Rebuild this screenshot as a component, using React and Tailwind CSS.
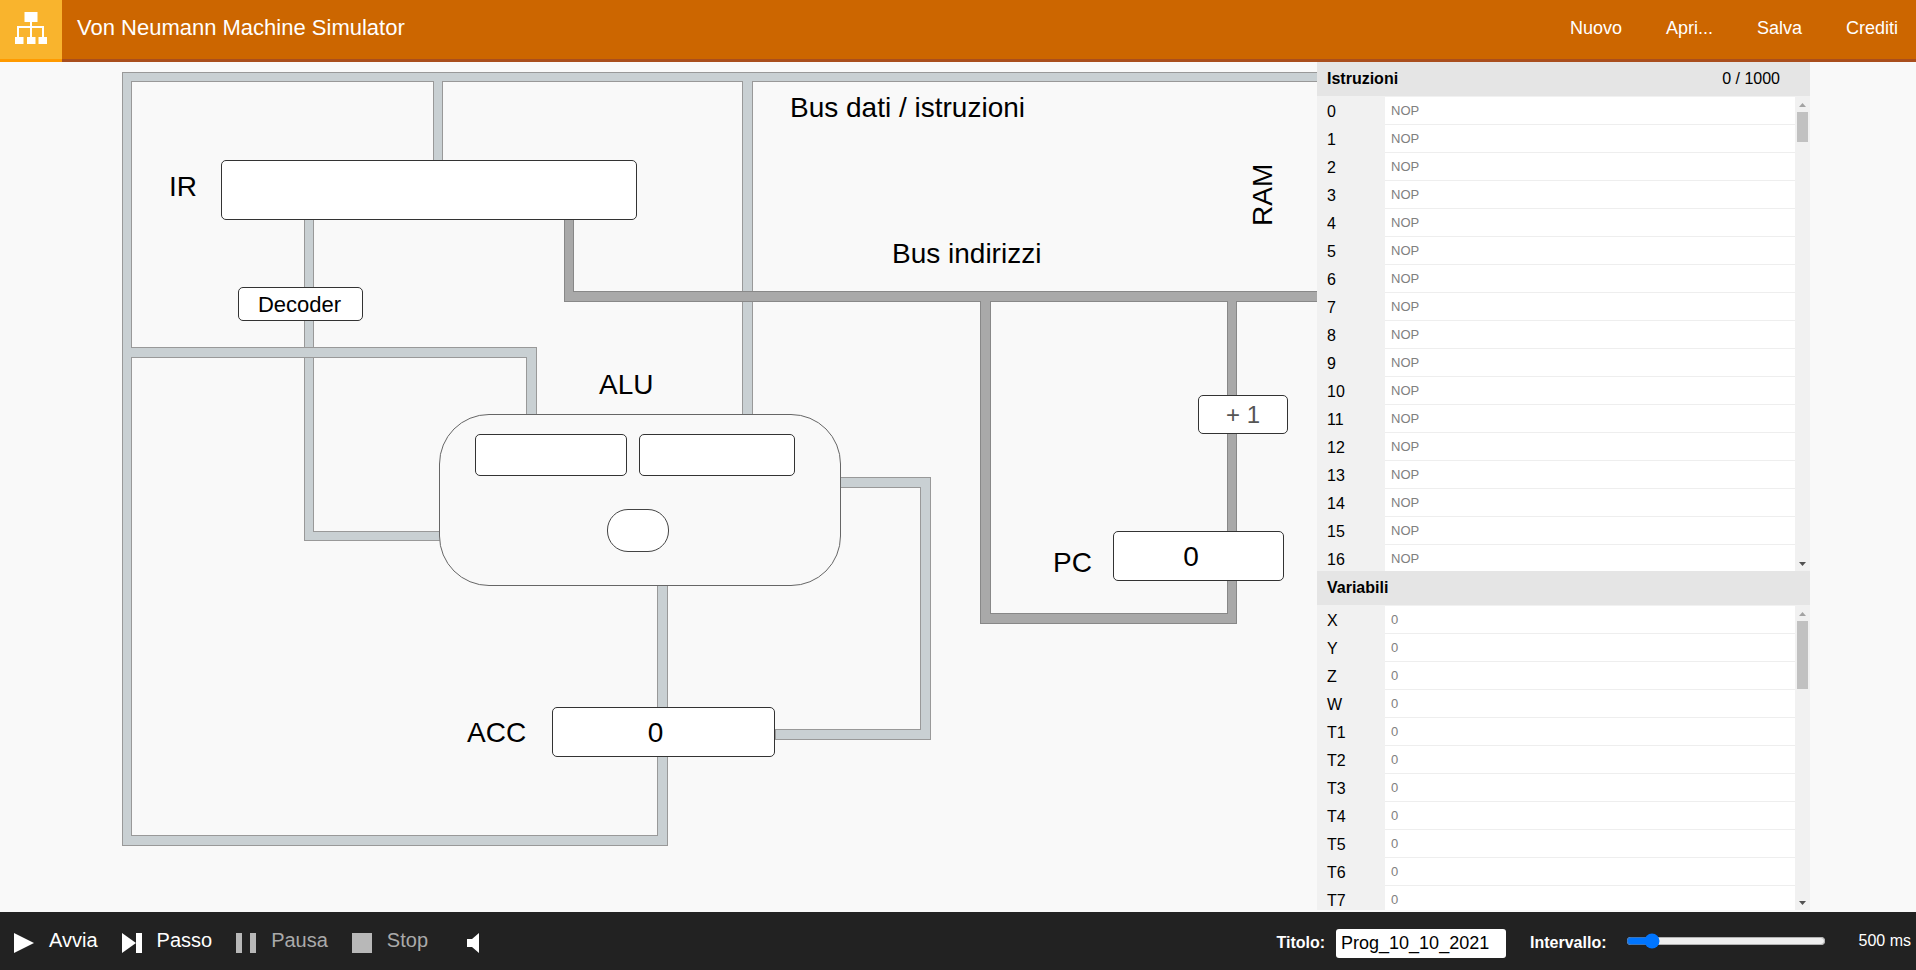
import { useState } from "react";

// only the rows that show in the panels
const instructions = Array.from({ length: 17 }, (_, i) => ({ label: String(i), value: "NOP" }));

const variables = ["X", "Y", "Z", "W", "T1", "T2", "T3", "T4", "T5", "T6", "T7"].map((label) => ({ label, value: "0" }));

function SitemapIcon() {
  return (
    <svg width="62" height="59" viewBox="0 0 62 59" fill="#fff">
      <rect x="24.5" y="12" width="13" height="10" />
      <rect x="30" y="22" width="2" height="15" />
      <rect x="17" y="26" width="27" height="2" />
      <rect x="17" y="26" width="2" height="11" />
      <rect x="42" y="26" width="2" height="11" />
      <rect x="15" y="37" width="8.5" height="7" />
      <rect x="27" y="37" width="8.5" height="7" />
      <rect x="38.5" y="37" width="8.5" height="7" />
    </svg>
  );
}

function ToolButton({ icon, label, disabled, gap }) {
  return (
    <button className={`flex items-center ${gap} text-[20px] leading-none ${disabled ? "text-[#aaaaaa]" : "text-white"}`}>
      <span className="mt-1">{icon}</span>
      <span className="-mt-[2px]">{label}</span>
    </button>
  );
}

function Wire({ className }) {
  return <div className={`absolute border border-[#999999] bg-[#c9d0d3] ${className}`} />;
}

function DarkWire({ className }) {
  return <div className={`absolute border border-[#888888] bg-[#a9a9a9] ${className}`} />;
}

function Label({ className, children }) {
  return <div className={`absolute whitespace-nowrap text-[28px] leading-[28px] text-black ${className}`}>{children}</div>;
}

function Box({ className, children }) {
  return (
    <div className={`absolute flex items-center justify-center rounded-[5px] border border-[#333333] bg-white ${className}`}>
      {children}
    </div>
  );
}

function Diagram() {
  return (
    <div className="relative h-full w-[1317px] shrink-0 overflow-hidden">
      {/* bus dati: horizontals first, verticals cover the border where they join */}
      <Wire className="left-[122px] top-[10px] h-[10px] w-[1195px] border-r-0" />
      <Wire className="left-[122px] top-[773px] h-[11px] w-[546px]" />
      <Wire className="left-[304px] top-[469px] h-[10px] w-[137px]" />
      <Wire className="left-[840px] top-[415px] h-[11px] w-[91px]" />
      <Wire className="left-[775px] top-[667px] h-[11px] w-[156px]" />

      <Wire className="left-[122px] top-[19px] h-[755px] w-[10px] border-y-0" />
      <Wire className="left-[433px] top-[19px] h-[80px] w-[10px] border-y-0" />
      <Wire className="left-[742px] top-[19px] h-[334px] w-[11px] border-y-0" />
      <Wire className="left-[304px] top-[158px] h-[312px] w-[10px] border-y-0" />
      <Wire className="left-[657px] top-[523px] h-[251px] w-[11px] border-y-0" />
      <Wire className="left-[920px] top-[425px] h-[243px] w-[11px] border-y-0" />

      <Wire className="left-[131px] top-[285px] h-[11px] w-[406px] border-l-0" />
      <Wire className="left-[526px] top-[295px] h-[58px] w-[11px] border-y-0" />

      {/* bus indirizzi */}
      <DarkWire className="left-[564px] top-[229px] h-[11px] w-[753px] border-r-0" />
      <DarkWire className="left-[980px] top-[551px] h-[11px] w-[257px]" />
      <DarkWire className="left-[564px] top-[158px] h-[72px] w-[10px] border-y-0" />
      <DarkWire className="left-[980px] top-[239px] h-[313px] w-[11px] border-y-0" />
      <DarkWire className="left-[1227px] top-[239px] h-[313px] w-[10px] border-y-0" />

      <Label className="left-[790px] top-[32px]">Bus dati / istruzioni</Label>
      <Label className="left-[892px] top-[178px]">Bus indirizzi</Label>
      <Label className="left-[1232px] top-[119px] w-[62px] -rotate-90 text-center">RAM</Label>
      <Label className="left-[169px] top-[111px]">IR</Label>
      <Label className="left-[599px] top-[309px]">ALU</Label>
      <Label className="left-[1053px] top-[487px]">PC</Label>
      <Label className="left-[467px] top-[657px]">ACC</Label>

      <Box className="left-[221px] top-[98px] h-[60px] w-[416px]" />
      <Box className="left-[238px] top-[225px] h-[34px] w-[125px] pr-[2px] text-[22px] text-black">Decoder</Box>

      <div className="absolute left-[439px] top-[352px] h-[172px] w-[402px] rounded-[50px] border border-[#666666] bg-[#f9f9f9]" />
      <Box className="left-[475px] top-[372px] h-[42px] w-[152px]" />
      <Box className="left-[639px] top-[372px] h-[42px] w-[156px]" />
      <Box className="left-[607px] top-[447px] h-[43px] w-[62px] rounded-[21px] border-[#444444]" />

      <Box className="left-[1198px] top-[333px] h-[39px] w-[90px] pt-[1px] text-[24px] text-[#555555]">+ 1</Box>
      <Box className="left-[1113px] top-[469px] h-[50px] w-[171px] pr-[15px] pt-[2px] text-[28px] text-black">0</Box>
      <Box className="left-[552px] top-[645px] h-[50px] w-[223px] pr-[16px] pt-[2px] text-[28px] text-black">0</Box>
    </div>
  );
}

function ScrollBar({ thumbClass }) {
  return (
    <div className="flex w-[15px] shrink-0 flex-col items-center bg-[#f1f1f1]">
      <div className="flex h-[15px] shrink-0 items-center justify-center">
        <svg width="7" height="4" viewBox="0 0 7 4" fill="#a3a3a3">
          <path d="M3.5 0 7 4H0Z" />
        </svg>
      </div>
      <div className={`w-[11px] shrink-0 bg-[#c1c1c1] ${thumbClass}`} />
      <div className="flex-1" />
      <div className="flex h-[15px] shrink-0 items-center justify-center">
        <svg width="7" height="4" viewBox="0 0 7 4" fill="#505050">
          <path d="M0 0H7L3.5 4Z" />
        </svg>
      </div>
    </div>
  );
}

function Section({ title, right, rows, listClass, thumbClass }) {
  return (
    <div className="flex flex-col">
      <div className="flex h-[35px] items-center justify-between border-b border-[#f1f1f1] bg-[#e5e5e5] pl-[10px] pr-[30px] text-[16px] text-black">
        <span className="font-bold">{title}</span>
        {right && <span>{right}</span>}
      </div>
      <div className={`flex bg-[#f1f1f1] ${listClass}`}>
        <div className="flex-1 overflow-hidden">
          {rows.map((row) => (
            <div key={row.label} className="flex h-[28px]">
              <div className="flex w-[68px] shrink-0 items-center pl-[10px] pt-[2px] text-[16px] text-black">{row.label}</div>
              <div className="flex flex-1 items-center border-b border-[#eeeeee] bg-white pl-[6px] text-[13px] text-[#808080]">
                {row.value}
              </div>
            </div>
          ))}
        </div>
        <ScrollBar thumbClass={thumbClass} />
      </div>
    </div>
  );
}

export default function App() {
  const [title, setTitle] = useState("Prog_10_10_2021");
  const [interval, setInterval] = useState(500);

  return (
    <div className="flex h-[970px] flex-col overflow-hidden bg-[#f9f9f9] font-['Liberation_Sans',sans-serif]">
      <header className="flex h-[62px] shrink-0">
        <div className="h-[62px] w-[62px] shrink-0 border-b-[3px] border-[#ff9a00] bg-[#f9b42d]">
          <SitemapIcon />
        </div>
        <div className="flex flex-1 items-center justify-between border-b-[3px] border-[#a94e1d] bg-[#cc6600] pl-[15px] pr-[18px] text-white">
          <span className="-mt-[4px] text-[22px]">Von Neumann Machine Simulator</span>
          <nav className="-mt-[2px] flex gap-[44px] text-[18px]">
            <a>Nuovo</a>
            <a>Apri...</a>
            <a>Salva</a>
            <a>Crediti</a>
          </nav>
        </div>
      </header>

      <main className="flex h-[850px] shrink-0">
        <Diagram />
        <div className="w-[493px] shrink-0">
          <Section title="Istruzioni" right="0 / 1000" rows={instructions} listClass="h-[474px]" thumbClass="h-[30px]" />
          <Section title="Variabili" rows={variables} listClass="h-[304px]" thumbClass="h-[68px]" />
        </div>
      </main>

      <footer className="flex h-[58px] shrink-0 items-center bg-[#222222] pl-[14px] pr-[5px]">
        <div className="flex items-center gap-[24px]">
          <ToolButton
            gap="gap-[15px]"
            label="Avvia"
            icon={
              <svg className="block" width="20" height="20" viewBox="0 0 20 20" fill="#fff">
                <path d="M0 0 20 10 0 20Z" />
              </svg>
            }
          />
          <ToolButton
            gap="gap-[15px]"
            label="Passo"
            icon={
              <svg className="block" width="20" height="20" viewBox="0 0 20 20" fill="#fff">
                <path d="M0 0 14 10 0 20Z" />
                <rect x="14" y="0" width="6" height="20" />
              </svg>
            }
          />
          <ToolButton
            disabled
            gap="gap-[15px]"
            label="Pausa"
            icon={
              <svg className="block" width="20" height="20" viewBox="0 0 20 20" fill="#b8b8b8">
                <rect x="0" y="0" width="6" height="20" />
                <rect x="14" y="0" width="6" height="20" />
              </svg>
            }
          />
          <ToolButton
            disabled
            gap="gap-[15px]"
            label="Stop"
            icon={
              <svg className="block" width="20" height="20" viewBox="0 0 20 20" fill="#b8b8b8">
                <rect width="20" height="20" />
              </svg>
            }
          />
        </div>
        <svg className="ml-[39px] mt-1 block" width="12" height="20" viewBox="0 0 12 20" fill="#fff">
          <path d="M0 6H5L12 0V20L5 14H0Z" />
        </svg>

        <div className="ml-auto flex items-center text-white">
          <label className="mt-1 text-[16px] font-bold">Titolo:</label>
          <input
            value={title}
            onChange={(e) => setTitle(e.target.value)}
            className="ml-[11px] mt-[5px] h-[29px] w-[170px] rounded-[3px] bg-white px-[5px] text-[18px] text-black outline-none"
          />
          <label className="ml-[24px] mt-1 text-[16px] font-bold">Intervallo:</label>
          <input
            type="range"
            min="0"
            max="5000"
            value={interval}
            onChange={(e) => setInterval(Number(e.target.value))}
            className="ml-[19px] w-[200px]"
          />
          <span className="ml-[33px] text-[16px]">{interval} ms</span>
        </div>
      </footer>
    </div>
  );
}
